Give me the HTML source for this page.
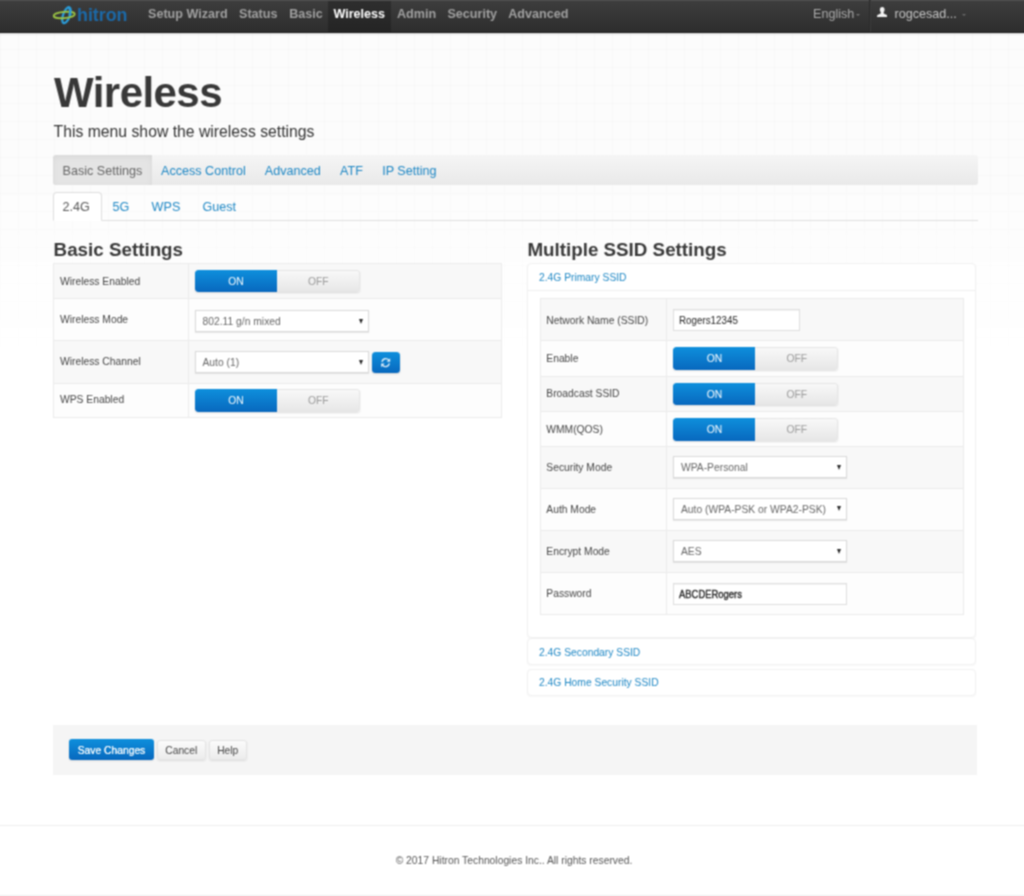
<!DOCTYPE html>
<html><head><meta charset="utf-8">
<style>
*{box-sizing:border-box;margin:0;padding:0}
html,body{width:1024px;height:896px;overflow:hidden;background:#fff}
body{font-family:"Liberation Sans",sans-serif;font-size:12.6px;color:#333}
#wrap{position:absolute;left:0;top:0;width:1024px;height:896px;overflow:hidden;background:#fff;filter:url(#soft)}
#grid{left:0;top:31px;width:1024px;height:330px;background-image:linear-gradient(rgba(0,0,0,.016) 1px,transparent 1px),linear-gradient(90deg,rgba(0,0,0,.016) 1px,transparent 1px);background-size:18px 18px;background-color:#fcfcfc;-webkit-mask-image:linear-gradient(#000 40%,transparent);mask-image:linear-gradient(#000 40%,transparent)}
.abs{position:absolute;white-space:nowrap}
a{color:#1c86c4;text-decoration:none}
#nav{left:-4px;top:-4px;width:1032px;height:36.8px;background:linear-gradient(#5c5c5c 4px,#3d3d3d 5.2px,#2d2d2d);border-bottom:1px solid #1d1d1d;box-shadow:0 1px 2px rgba(0,0,0,.15)}
.ni{top:0;height:32px;line-height:29.4px;font-weight:bold;font-size:12.6px;color:#a0a0a0}
.tog{width:165px;height:22.4px;border-radius:3px;overflow:hidden;font-size:10.3px;line-height:24.6px;text-align:center;box-shadow:0 1px 2px rgba(0,0,0,.12)}
.tog .on{position:absolute;left:0;top:0;padding-left:1px;width:82px;height:22.4px;background:linear-gradient(#0e8fdc,#0868be);color:#fff;border-radius:3px 0 0 3px}
.tog .off{position:absolute;left:82px;top:0;padding-left:1.5px;width:83px;height:22.4px;background:linear-gradient(#f8f8f8,#e7e7e7);color:#999;border:1px solid #e6e6e6;border-left:0;border-radius:0 3px 3px 0;line-height:22.6px}
.sel{height:22px;background:#fff;border:1px solid #d9d9d9;font-size:10.3px;line-height:21.4px;padding-left:7px;color:#666;box-shadow:0 1px 1px rgba(0,0,0,.08)}
.sel:after{content:"";position:absolute;right:4.6px;top:7.6px;border:2.9px solid transparent;border-top:5px solid #2a2a2a;border-bottom:0}
.inp{height:22px;background:#fff;border:1px solid #dedede;font-size:10.6px;line-height:21px;padding-left:5px;color:#222;box-shadow:inset 0 1px 1px rgba(0,0,0,.05)}
.inp span{display:inline-block;transform-origin:0 50%}
.lab{font-size:10.3px;line-height:14px;color:#444}
.row{left:0;width:100%;border-top:1px solid #ebebeb}
.row{background:#fdfdfd}
.row.odd{background:#f8f8f8}
.btn{height:20px;border-radius:3px;font-size:10.3px;line-height:19.4px;text-align:center;border:1px solid #e4e4e4;background:linear-gradient(#fbfbfb,#ececec);color:#444;box-shadow:0 1px 2px rgba(0,0,0,.1)}
.acc{left:527px;width:449px;border:1px solid #f1f1f1;border-radius:4px;background:#fff;box-shadow:0 1px 2px rgba(0,0,0,.03)}
</style></head><body><svg width="0" height="0" style="position:absolute"><filter id="soft" x="0" y="0" width="100%" height="100%" color-interpolation-filters="sRGB"><feConvolveMatrix order="3" kernelMatrix="0.0576 0.1248 0.0576 0.1248 0.2704 0.1248 0.0576 0.1248 0.0576" divisor="1" edgeMode="duplicate" preserveAlpha="true"/></filter></svg>
<div id="wrap">

<div id="grid" class="abs"></div>
<!-- NAV -->
<div id="nav" class="abs"></div>
<div class="abs" style="left:328px;top:0.6px;width:63px;height:31px;background:linear-gradient(#2e2e2e,#242424)"></div>
<svg class="abs" style="left:50px;top:4px" width="82" height="22" viewBox="50 4 82 22">
 <ellipse cx="66.5" cy="15.2" rx="3.4" ry="8.4" fill="none" stroke="#2a9bd8" stroke-width="2.3" transform="rotate(20 66.5 15.2)"/>
 <ellipse cx="64.2" cy="15" rx="10.6" ry="3.1" fill="none" stroke="#9cc544" stroke-width="1.8" transform="rotate(-5 64.2 15)"/>
 <path d="M68.6 7.6 Q71.5 10 69.2 15.5" fill="none" stroke="#2a9bd8" stroke-width="2.3"/>
 <text x="77" y="20.6" font-family="Liberation Sans" font-weight="bold" font-size="18.2" fill="#1b69a8" textLength="50.5" lengthAdjust="spacingAndGlyphs">hitron</text>
</svg>
<div class="abs ni" style="left:148px">Setup Wizard</div>
<div class="abs ni" style="left:239px">Status</div>
<div class="abs ni" style="left:289.2px">Basic</div>
<div class="abs ni" style="left:333.4px;color:#fff">Wireless</div>
<div class="abs ni" style="left:397px">Admin</div>
<div class="abs ni" style="left:447.4px">Security</div>
<div class="abs ni" style="left:508.2px">Advanced</div>
<div class="abs ni" style="left:813px;font-weight:normal;color:#aaa">English</div>
<div class="abs" style="left:856px;top:13.8px;border:2.4px solid transparent;border-top:2.8px solid #777;border-bottom:0"></div>
<div class="abs" style="left:868.6px;top:0;width:1px;height:32px;background:#2a2a2a"></div>
<div class="abs" style="left:869.6px;top:0;width:1px;height:32px;background:#3c3c3c"></div>
<svg class="abs" style="left:876.5px;top:7.1px" width="10.4" height="10" viewBox="0 0 10.4 10"><ellipse cx="5.2" cy="2.8" rx="2.35" ry="2.8" fill="#f2f2f2"/><path d="M0 10 C0 8.4 0.4 7.9 1.6 7.5 C3.2 7 3.9 6.6 3.9 5 L6.5 5 C6.5 6.6 7.2 7 8.8 7.5 C10 7.9 10.4 8.4 10.4 10Z" fill="#f2f2f2"/></svg>
<div class="abs ni" style="left:894.5px;font-weight:normal;color:#c4c4c4">rogcesad...</div>
<div class="abs" style="left:961.8px;top:13.6px;border:2.4px solid transparent;border-top:2.8px solid #6a6a6a;border-bottom:0"></div>

<!-- HEADER -->
<div class="abs" style="left:54px;top:68.3px;font-size:42px;font-weight:bold;line-height:50px;color:#383838;letter-spacing:-0.55px">Wireless</div>
<div class="abs" style="left:53.6px;top:121.6px;font-size:15.75px;line-height:20px;color:#333">This menu show the wireless settings</div>

<!-- PILL BAR -->
<div class="abs" style="left:53px;top:155px;width:925px;height:30px;background:linear-gradient(#f5f5f5,#e9e9e9);border-radius:3px"></div>
<div class="abs" style="left:53px;top:155px;width:99px;height:30px;background:#e4e4e4;border-radius:3px 0 0 3px;box-shadow:inset 0 2px 6px rgba(0,0,0,.05)"></div>
<div class="abs" style="left:62.5px;top:161.8px;line-height:18px;color:#666">Basic Settings</div>
<a class="abs" style="left:161px;top:161.8px;line-height:18px">Access Control</a>
<a class="abs" style="left:264.8px;top:161.8px;line-height:18px">Advanced</a>
<a class="abs" style="left:340px;top:161.8px;line-height:18px">ATF</a>
<a class="abs" style="left:382.2px;top:161.8px;line-height:18px">IP Setting</a>

<!-- TABS -->
<div class="abs" style="left:53px;top:220px;width:925px;height:1px;background:#dedede"></div>
<div class="abs" style="left:53px;top:192px;width:49px;height:29px;border:1px solid #ddd;border-bottom-color:#fff;border-radius:4px 4px 0 0;background:#fff"></div>
<div class="abs" style="left:62.6px;top:197.8px;line-height:18px;color:#555">2.4G</div>
<a class="abs" style="left:112.6px;top:197.8px;line-height:18px">5G</a>
<a class="abs" style="left:151.6px;top:197.8px;line-height:18px">WPS</a>
<a class="abs" style="left:202.4px;top:197.8px;line-height:18px">Guest</a>

<!-- HEADINGS -->
<div class="abs" style="left:53.6px;top:238.5px;font-size:18.8px;font-weight:bold;line-height:22px;color:#383838">Basic Settings</div>
<div class="abs" style="left:527.4px;top:238.5px;font-size:18.8px;font-weight:bold;line-height:22px;color:#383838">Multiple SSID Settings</div>

<!-- LEFT TABLE -->
<div class="abs" style="left:53px;top:263px;width:449px;height:155px;border:1px solid #ebebeb;border-top:0;background:#fdfdfd">
 <div class="abs row odd" style="top:0;height:35px"></div>
 <div class="abs row" style="top:35px;height:42px"></div>
 <div class="abs row odd" style="top:77px;height:43px"></div>
 <div class="abs row" style="top:120px;height:34px"></div>
 <div class="abs" style="left:134px;top:0;width:1px;height:154px;background:#ebebeb"></div>
</div>
<div class="abs lab" style="left:60px;top:275px">Wireless Enabled</div>
<div class="abs lab" style="left:60px;top:313.3px">Wireless Mode</div>
<div class="abs lab" style="left:60px;top:355px">Wireless Channel</div>
<div class="abs lab" style="left:60px;top:393px">WPS Enabled</div>
<div class="abs tog" style="left:194.5px;top:270px"><div class="on">ON</div><div class="off">OFF</div></div>
<div class="abs sel" style="left:194.5px;top:310px;width:174.5px">802.11 g/n mixed</div>
<div class="abs sel" style="left:194.5px;top:351px;width:174.5px">Auto (1)</div>
<div class="abs" style="left:371.6px;top:351.5px;width:28.5px;height:21.8px;border-radius:3.5px;background:linear-gradient(#0e8fdc,#0868be);box-shadow:0 1px 2px rgba(0,0,0,.15)"></div>
<svg class="abs" style="left:379.7px;top:356.8px" width="11.3" height="11.3" viewBox="0 0 12 12" opacity=".88"><path d="M2.1 5.2 A4 4 0 0 1 9.2 3.3" fill="none" stroke="#fff" stroke-width="1.5"/><path d="M10.8 1.2 V5 H7Z" fill="#fff"/><path d="M9.9 6.8 A4 4 0 0 1 2.8 8.7" fill="none" stroke="#fff" stroke-width="1.5"/><path d="M1.2 10.8 V7 H5Z" fill="#fff"/></svg>
<div class="abs tog" style="left:194.5px;top:389.3px"><div class="on">ON</div><div class="off">OFF</div></div>

<!-- RIGHT ACCORDION -->
<div class="abs acc" style="top:263px;height:375px"></div>
<a class="abs" style="left:539px;top:271.3px;font-size:10.3px;line-height:14px">2.4G Primary SSID</a>
<div class="abs" style="left:528px;top:290px;width:447px;height:1px;background:#efefef"></div>
<div class="abs" style="left:540px;top:298px;width:424px;height:317px;border:1px solid #ebebeb;border-top:0;background:#fff">
 <div class="abs row odd" style="top:0;height:42px"></div>
 <div class="abs row" style="top:42px;height:36px"></div>
 <div class="abs row odd" style="top:78px;height:35px"></div>
 <div class="abs row" style="top:113px;height:35px"></div>
 <div class="abs row odd" style="top:148px;height:42px"></div>
 <div class="abs row" style="top:190px;height:42px"></div>
 <div class="abs row odd" style="top:232px;height:42px"></div>
 <div class="abs row" style="top:274px;height:42px"></div>
 <div class="abs" style="left:125px;top:0;width:1px;height:316px;background:#ebebeb"></div>
</div>
<div class="abs lab" style="left:546.3px;top:313.6px">Network Name (SSID)</div>
<div class="abs lab" style="left:546.3px;top:351.5px">Enable</div>
<div class="abs lab" style="left:546.3px;top:387px">Broadcast SSID</div>
<div class="abs lab" style="left:546.3px;top:423px">WMM(QOS)</div>
<div class="abs lab" style="left:546.3px;top:461px">Security Mode</div>
<div class="abs lab" style="left:546.3px;top:503px">Auth Mode</div>
<div class="abs lab" style="left:546.3px;top:545px">Encrypt Mode</div>
<div class="abs lab" style="left:546.3px;top:587px">Password</div>
<div class="abs inp" style="left:673px;top:308.5px;width:127px"><span style="transform:scaleX(.925)">Rogers12345</span></div>
<div class="abs tog" style="left:673px;top:347.4px"><div class="on">ON</div><div class="off">OFF</div></div>
<div class="abs tog" style="left:673px;top:382.7px"><div class="on">ON</div><div class="off">OFF</div></div>
<div class="abs tog" style="left:673px;top:418.2px"><div class="on">ON</div><div class="off">OFF</div></div>
<div class="abs sel" style="left:673px;top:456px;width:174px">WPA-Personal</div>
<div class="abs sel" style="left:673px;top:497.8px;width:174px">Auto (WPA-PSK or WPA2-PSK)</div>
<div class="abs sel" style="left:673px;top:540.2px;width:174px">AES</div>
<div class="abs inp" style="left:673px;top:582.5px;width:174px;color:#222"><span style="transform:scaleX(.89);-webkit-text-stroke:.35px #222">ABCDERogers</span></div>

<div class="abs acc" style="top:638px;height:27px"></div>
<a class="abs" style="left:539px;top:646.4px;font-size:10.3px;line-height:14px">2.4G Secondary SSID</a>
<div class="abs acc" style="top:669px;height:27px"></div>
<a class="abs" style="left:539px;top:676px;font-size:10.3px;line-height:14px">2.4G Home Security SSID</a>

<!-- FORM ACTIONS -->
<div class="abs" style="left:53px;top:725px;width:924px;height:50px;background:#f5f5f5"></div>
<div class="abs btn" style="left:69px;top:739px;width:85px;height:21px;line-height:23.8px;background:linear-gradient(#0e8fdc,#0868be);border:0;color:#fff;text-shadow:0 0 .5px #fff">Save Changes</div>
<div class="abs btn" style="left:157px;top:740px;width:48.5px">Cancel</div>
<div class="abs btn" style="left:209px;top:740px;width:37.5px">Help</div>

<!-- FOOTER -->
<div class="abs" style="left:0;top:895px;width:1024px;height:1px;background:#f0f0f0"></div>
<div class="abs" style="left:0;top:825px;width:1024px;height:1px;background:#eee"></div>
<div class="abs" style="left:0;top:853.5px;width:1028px;text-align:center;font-size:10.32px;line-height:14px;color:#555">© 2017 Hitron Technologies Inc.. All rights reserved.</div>
</div></body></html>
